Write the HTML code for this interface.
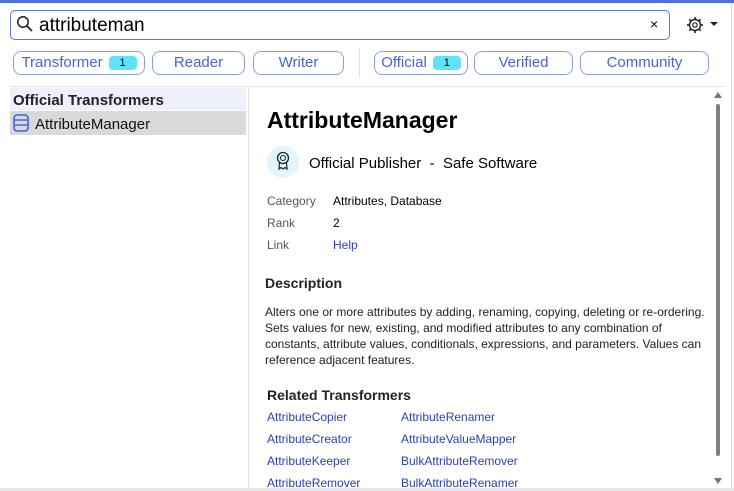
<!DOCTYPE html>
<html><head><style>
*{margin:0;padding:0;box-sizing:border-box}
body{width:734px;height:491px;background:#fff;font-family:"Liberation Sans",sans-serif;position:relative;overflow:hidden;color:#000}
.abs{position:absolute}
.chip{position:absolute;top:51px;height:24px;border:1.5px solid #8c9ee8;border-radius:8px;color:#4a63d0;font-size:15px;line-height:22px;text-align:center}
.badge{display:inline-block;background:#5ee3fb;color:#000;font-size:11px;line-height:14px;border-radius:4px;width:28px;margin-left:6px;vertical-align:1px}
.k{position:absolute;left:267px;font-size:12px;color:#555}
.v{position:absolute;left:333px;font-size:12px}
.l{position:absolute;font-size:12px;color:#2b3fb8}
</style></head><body>
<div class="abs" style="left:0;top:0;width:734px;height:3px;background:#4d6ee3"></div>
<div class="abs" style="left:731px;top:3px;width:1px;height:488px;background:#ddd"></div>
<div class="abs" style="left:0;top:488px;width:734px;height:3px;background:#e6e6e6"></div>
<div class="abs" style="left:10px;top:10px;width:660px;height:30px;border:1.5px solid #5a78e0;border-radius:5px"></div>
<svg class="abs" style="left:16px;top:15px" width="18" height="18" viewBox="0 0 18 18"><circle cx="7" cy="7" r="5.2" fill="none" stroke="#222" stroke-width="1.5"/><line x1="11" y1="11" x2="16" y2="16" stroke="#222" stroke-width="1.8"/></svg>
<div class="abs" style="left:39px;top:15px;font-size:19px">attributeman</div>
<div class="abs" style="left:650px;top:16px;font-size:14px">×</div>
<svg class="abs" style="left:685px;top:15px" width="20" height="20" viewBox="0 0 20 20"><circle cx="10" cy="10" r="5.5" fill="none" stroke="#222" stroke-width="1.4"/><circle cx="10" cy="10" r="2.2" fill="none" stroke="#222" stroke-width="1.2"/><g stroke="#222" stroke-width="1.6"><line x1="10" y1="2" x2="10" y2="5"/><line x1="10" y1="15" x2="10" y2="18"/><line x1="2" y1="10" x2="5" y2="10"/><line x1="15" y1="10" x2="18" y2="10"/><line x1="4.3" y1="4.3" x2="6.3" y2="6.3"/><line x1="13.7" y1="13.7" x2="15.7" y2="15.7"/><line x1="4.3" y1="15.7" x2="6.3" y2="13.7"/><line x1="13.7" y1="6.3" x2="15.7" y2="4.3"/></g></svg>
<svg class="abs" style="left:710px;top:22px" width="8" height="5"><polygon points="0,0 8,0 4,4" fill="#222"/></svg>
<div class="chip" style="left:13px;width:132px">Transformer<span class="badge">1</span></div>
<div class="chip" style="left:152px;width:93px">Reader</div>
<div class="chip" style="left:253px;width:91px">Writer</div>
<div class="abs" style="left:359px;top:48px;width:1px;height:30px;background:#e2e2e2"></div>
<div class="chip" style="left:374px;width:94px">Official<span class="badge" style="width:28px">1</span></div>
<div class="chip" style="left:474px;width:99px">Verified</div>
<div class="chip" style="left:580px;width:129px">Community</div>
<div class="abs" style="left:10px;top:86px;width:714px;height:1px;background:#e4e4e4"></div>
<div class="abs" style="left:10px;top:88px;width:236px;height:22px;background:#eef0fd"></div>
<div class="abs" style="left:13px;top:92px;font-size:15px;font-weight:bold;color:#222">Official Transformers</div>
<div class="abs" style="left:10px;top:111px;width:236px;height:24px;background:#d9d9d9"></div>
<svg class="abs" style="left:13px;top:114px" width="16" height="18" viewBox="0 0 16 18"><rect x="1" y="1" width="14" height="16" rx="3" fill="none" stroke="#3b63e0" stroke-width="1.6"/><line x1="1" y1="6" x2="15" y2="6" stroke="#3b63e0" stroke-width="1.4"/><line x1="1" y1="11" x2="15" y2="11" stroke="#3b63e0" stroke-width="1.4"/></svg>
<div class="abs" style="left:35px;top:116px;font-size:15px;color:#111">AttributeManager</div>
<div class="abs" style="left:248px;top:88px;width:1px;height:400px;background:#e2e2e2"></div>
<div class="abs" style="left:267px;top:107px;font-size:23px;font-weight:bold">AttributeManager</div>
<div class="abs" style="left:267px;top:146px;width:32px;height:32px;border-radius:50%;background:#e0f6fd"></div>
<svg class="abs" style="left:275px;top:151px" width="16" height="22" viewBox="0 0 16 22"><circle cx="8" cy="7" r="5.5" fill="none" stroke="#222" stroke-width="1.3"/><circle cx="8" cy="7" r="2.5" fill="none" stroke="#222" stroke-width="1.1"/><path d="M4.5 11.5 L4 18 L6 16.5 L8 18 L10 16.5 L12 18 L11.5 11.5" fill="none" stroke="#222" stroke-width="1.2"/></svg>
<div class="abs" style="left:309px;top:155px;font-size:15px">Official Publisher &nbsp;-&nbsp; Safe Software</div>
<div class="k" style="top:194px">Category</div><div class="v" style="top:194px">Attributes, Database</div>
<div class="k" style="top:216px">Rank</div><div class="v" style="top:216px">2</div>
<div class="k" style="top:238px">Link</div><div class="v" style="top:238px;color:#2b3fb8">Help</div>
<div class="abs" style="left:265px;top:275px;font-size:14px;font-weight:bold;color:#222">Description</div>
<div class="abs" style="left:265px;top:304px;width:440px;font-size:12px;line-height:16px;color:#222">Alters one or more attributes by adding, renaming, copying, deleting or re-ordering. Sets values for new, existing, and modified attributes to any combination of constants, attribute values, conditionals, expressions, and parameters. Values can reference adjacent features.</div>
<div class="abs" style="left:267px;top:387px;font-size:14px;font-weight:bold;color:#222">Related Transformers</div>
<div class="l" style="left:267px;top:410px">AttributeCopier</div><div class="l" style="left:401px;top:410px">AttributeRenamer</div>
<div class="l" style="left:267px;top:432px">AttributeCreator</div><div class="l" style="left:401px;top:432px">AttributeValueMapper</div>
<div class="l" style="left:267px;top:454px">AttributeKeeper</div><div class="l" style="left:401px;top:454px">BulkAttributeRemover</div>
<div class="l" style="left:267px;top:476px">AttributeRemover</div><div class="l" style="left:401px;top:476px">BulkAttributeRenamer</div>
<svg class="abs" style="left:714px;top:92px" width="8" height="6"><polygon points="0,6 8,6 4,0" fill="#777"/></svg>
<div class="abs" style="left:716px;top:104px;width:4px;height:352px;background:#808080;border-radius:2px"></div>
<svg class="abs" style="left:714px;top:478px" width="8" height="6"><polygon points="0,0 8,0 4,6" fill="#777"/></svg>
</body></html>
